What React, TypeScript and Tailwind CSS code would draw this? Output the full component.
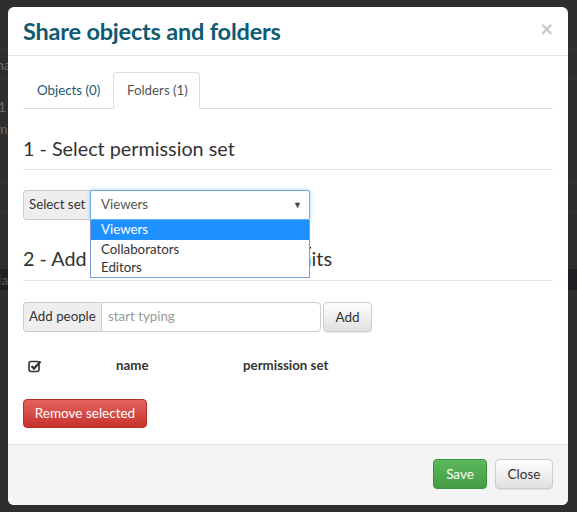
const btnGray =
  "h-[30px] rounded-[4px] border border-[#ccc] bg-gradient-to-b from-white to-[#e0e0e0] text-[13.5px] text-[#333] shadow-[inset_0_1px_0_rgba(255,255,255,0.15),0_1px_1px_rgba(0,0,0,0.075)]";

function CheckSquare() {
  return (
    <svg width="14" height="13" viewBox="0 0 14 13" className="block">
      <rect x="1" y="1.5" width="10" height="10" rx="2" fill="none" stroke="#333" strokeWidth="1.6" />
      <path d="M3.5 6 L6 8.6 L12.5 1.5" fill="none" stroke="#333" strokeWidth="2.2" />
    </svg>
  );
}

function Pointer() {
  return (
    <svg width="13" height="21" viewBox="0 0 13 21" className="absolute left-[209px] top-[46px]">
      <path
        d="M0.5 0.5 L0.5 16.5 L4.3 12.8 L7 19.5 L9.4 18.5 L6.8 12 L12 12 Z"
        fill="white"
        stroke="black"
        strokeWidth="1"
        strokeLinejoin="round"
      />
    </svg>
  );
}

export default function App() {
  return (
    <div className="relative w-[577px] h-[512px] overflow-hidden bg-[#2e2e2e] font-[Lato,sans-serif]">
      {/* page under the backdrop */}
      <div className="flex flex-col text-[14px] text-[#6a6a6a]">
        <div className="h-[50px] border-b border-[#383838]" />
        <div className="h-[29px] border-b border-[#383838] flex items-center -ml-[4px]">name</div>
        <div className="h-[38px] flex items-end -ml-[2px]">1</div>
        <div className="h-[22px] flex items-end -ml-[4px]">m</div>
        <div className="h-[44px] border-b border-[#383838]" />
        <div className="h-[29px] border-b border-[#383838]" />
        <div className="h-[57px]" />
        <div className="h-[21px] bg-[#1c2024] flex items-center -ml-[2px] text-[#555]">la</div>
      </div>

      {/* modal */}
      <div className="absolute left-[8px] top-[7px] w-[560px] h-[498px] bg-white rounded-[6px] flex flex-col overflow-hidden text-[#333]">
        <div className="h-[49px] shrink-0 border-b border-[#e5e5e5] px-[15px] flex items-center justify-between">
          <h4 className="text-[23.5px] leading-[26px] font-bold text-[#0f5a72] tracking-[-0.2px]">
            Share objects and folders
          </h4>
          <span className="text-[22px] leading-none font-bold text-[#c8c8c8] -mt-[4px]">×</span>
        </div>

        <div className="px-[15px] flex flex-col">
          {/* tabs */}
          <div className="mt-[16px] flex gap-[2px] border-b border-[#ddd] text-[13.3px]">
            <div className="h-[36px] w-[88px] pl-[13px] pt-[1px] flex items-center border border-transparent rounded-t-[4px] text-[#1b5a70]">
              Objects (0)
            </div>
            <div className="h-[37px] w-[87px] -mb-px pl-[13px] flex items-center border border-[#ddd] border-b-white rounded-t-[4px] bg-white text-[#555]">
              Folders (1)
            </div>
          </div>

          <h3 className="mt-[28px] text-[19.8px] leading-[23px] font-normal">1 - Select permission set</h3>
          <div className="mt-[9px] border-t border-[#e5e5e5]" />

          {/* select permission set */}
          <div className="mt-[20px] flex h-[30px] text-[13.3px]">
            <div className="w-[67px] pl-[5px] flex items-center bg-[#eee] border border-[#ccc] border-r-0 rounded-l-[4px] text-[#333]">
              Select set
            </div>
            <div className="relative w-[220px]">
              <div className="h-full flex items-center justify-between pl-[10px] pr-[7px] border border-[#66afe9] rounded-r-[2px] shadow-[0_0_4px_rgba(102,175,233,0.6)] text-[#555]">
                <span>Viewers</span>
                <span className="text-[9px] text-[#444]">▼</span>
              </div>
              <div className="absolute left-0 top-full w-full z-10 bg-white border border-t-0 border-[#7a9cd3] flex flex-col">
                <div className="h-[20px] pl-[10px] flex items-center bg-[#1e90ff] text-white">Viewers</div>
                <div className="h-[19px] pl-[10px] flex items-center">Collaborators</div>
                <div className="h-[18px] pl-[10px] flex items-center">Editors</div>
              </div>
              <Pointer />
            </div>
          </div>

          <h3 className="mt-[27px] text-[19.8px] leading-[23px] font-normal">2 - Add user to the permission units</h3>
          <div className="mt-[10px] border-t border-[#e5e5e5]" />

          {/* add people */}
          <div className="mt-[21px] flex items-center text-[13.3px]">
            <div className="h-[30px] w-[78px] pl-[5px] flex items-center bg-[#eee] border border-[#ccc] border-r-0 rounded-l-[4px] text-[#333]">
              Add people
            </div>
            <div className="h-[30px] w-[220px] pl-[6px] flex items-center border border-[#ccc] rounded-r-[4px] text-[#999]">
              start typing
            </div>
            <button className={`${btnGray} ml-[2px] w-[49px]`}>Add</button>
          </div>

          {/* table header */}
          <div className="mt-[16px] h-[36px] flex items-center text-[13.3px] font-bold">
            <div className="w-[85px] pl-[5px]">
              <CheckSquare />
            </div>
            <div className="w-[127px] pl-[8px]">name</div>
            <div className="pl-[8px]">permission set</div>
          </div>

          <div className="mt-[15px]">
            <button className="h-[29px] w-[124px] rounded-[4px] border border-[#b92c28] bg-gradient-to-b from-[#e2625e] to-[#c9302c] text-[13.5px] text-white">
              Remove selected
            </button>
          </div>
        </div>

        {/* footer */}
        <div className="mt-auto h-[61px] shrink-0 border-t border-[#e5e5e5] bg-[#f4f4f4] px-[15px] pt-[14px] flex items-start justify-end gap-[8px]">
          <button className="h-[30px] w-[54px] rounded-[4px] border border-[#3e8f3e] bg-gradient-to-b from-[#5cb85c] to-[#449d44] text-[13.5px] text-white">
            Save
          </button>
          <button className={`${btnGray} w-[58px]`}>Close</button>
        </div>
      </div>
    </div>
  );
}
